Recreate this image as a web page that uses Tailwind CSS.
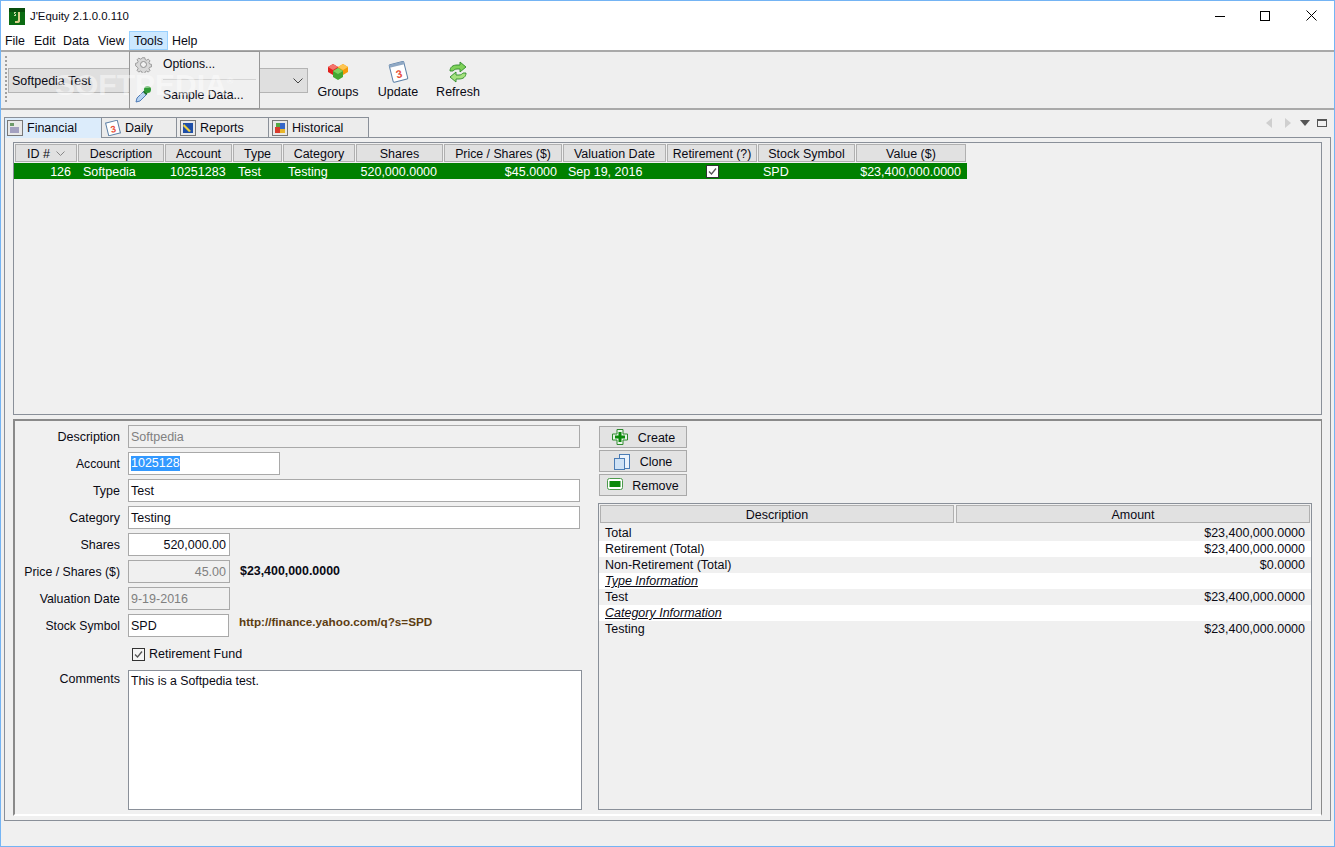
<!DOCTYPE html>
<html>
<head>
<meta charset="utf-8">
<script src="https://cdn.jsdelivr.net/npm/@tailwindcss/browser@4"></script>
</head>
<body class="m-0 overflow-hidden">
<div class="relative w-[1335px] h-[847px] border border-[#74b4f4] bg-[#f0f0f0] flex flex-col text-[12.5px] leading-[16px] text-[#0a0a14] font-['Liberation_Sans',Arial,sans-serif] overflow-hidden">

  <!-- title bar -->
  <div class="h-[29px] shrink-0 bg-white flex items-center pl-[8px] relative">
    <svg class="w-[16px] h-[17px] mt-[2px]" viewBox="0 0 16 17"><rect width="16" height="17" fill="#0b6b12"/><rect x="0" y="0" width="16" height="4" fill="#084d0c"/><path d="M9 4h2v9q0 2-3 2H6v-2h2q1 0 1-1z" fill="#d9d08a"/><path d="M5 4h2v1H6v1h1v2H5V7h1V6H5z" fill="#c6d7a0"/></svg>
    <span class="ml-[5px] mt-[1px] text-[11.4px]">J'Equity 2.1.0.0.110</span>
    <div class="absolute right-[0px] top-[0px] h-[29px] flex items-center">
      <svg class="w-[10px] h-[10px] mr-[35px]" viewBox="0 0 10 10"><path d="M0 5.5h10" stroke="#000" stroke-width="1"/></svg>
      <svg class="w-[10px] h-[10px] mr-[36px]" viewBox="0 0 10 10"><rect x=".5" y=".5" width="9" height="9" fill="none" stroke="#000"/></svg>
      <svg class="w-[11px] h-[11px] mr-[17px]" viewBox="0 0 11 11"><path d="M.5.5l10 10M10.5.5l-10 10" stroke="#000" stroke-width="1"/></svg>
    </div>
  </div>

  <!-- menu bar -->
  <div class="h-[20px] shrink-0 bg-white flex items-start text-[12.4px] pl-[4px] pt-[3px] leading-[16px]">
    <span class="mr-[10px] w-[19px]">File</span>
    <span class="mr-[7px] w-[22px]">Edit</span>
    <span class="mr-[9px] w-[26px]">Data</span>
    <span class="mr-[4px] w-[27px]">View</span>
    <span class="-mt-[2px] h-[19px] w-[39px] bg-[#cce8ff] border border-[#99d1ff] text-center leading-[18px]">Tools</span>
    <span class="ml-[4px]">Help</span>
  </div>

  <!-- toolbar -->
  <div class="h-[60px] shrink-0 border-t-2 border-b-2 border-[#a9a9a9] bg-[#efefef] flex items-start relative">
    <div class="ml-[4px] mt-[4px] w-[2px] h-[46px] border-l-2 border-dotted border-[#a0a0a0]"></div>
    <div class="ml-[1px] mt-[16px] w-[300px] h-[25px] bg-[#dfdfdf] border border-[#b4b4b4] flex items-center justify-between pl-[3px] pr-[4px]">
      <span>Softpedia Test</span>
      <svg class="w-[10px] h-[6px]" viewBox="0 0 10 6"><path d="M.5.5l4.5 4.5 4.5-4.5" fill="none" stroke="#444" stroke-width="1"/></svg>
    </div>
    <div class="ml-[10px] w-[40px] flex flex-col items-center mt-[10px]">
      <svg class="w-[22px] h-[19px]" viewBox="0 0 22 19"><path d="M1 5l5-3 5 3v5l-5 3-5-3z" fill="#e0201c"/><path d="M11 5l5-3 5 3v5l-5 3-5-3z" fill="#f59a0a"/><path d="M6 9l5-3 5 3v6l-5 3-5-3z" fill="#44a833"/><path d="M6 9l5 3 5-3-5-3z" fill="#7ed35f"/><path d="M1 5l5 3 5-3-5-3z" fill="#f4746b"/><path d="M11 5l5 3 5-3-5-3z" fill="#fdc552"/></svg>
      <span class="mt-[3px] whitespace-nowrap">Groups</span>
    </div>
    <div class="ml-[20px] w-[40px] flex flex-col items-center mt-[10px]">
      <svg class="w-[22px] h-[22px] -mt-[1px] -mb-[2px]" viewBox="0 0 22 22"><g transform="rotate(-14 11 11)"><rect x="4" y="2" width="15" height="18" rx="1" fill="#fff" stroke="#5b7fa6"/><rect x="4" y="2" width="15" height="3" fill="#8fa8c4"/><text x="11.5" y="17" font-size="11" font-weight="700" text-anchor="middle" fill="#e8503a" font-family="Liberation Sans">3</text></g></svg>
      <span class="mt-[3px] whitespace-nowrap">Update</span>
    </div>
    <div class="ml-[20px] w-[40px] flex flex-col items-center mt-[10px]">
      <svg class="w-[22px] h-[22px] -mt-[1px] -mb-[2px]" viewBox="0 0 22 22"><path d="M3 10c0-4 3-6 7-6h3V1l6 5-6 5V8h-3c-2 0-3 1-4 2z" fill="#7fd25a" stroke="#2f8a2a" stroke-width=".9"/><path d="M19 12c0 4-3 6-7 6H9v3l-6-5 6-5v3h3c2 0 3-1 4-2z" fill="#a5e27f" stroke="#2f8a2a" stroke-width=".9"/></svg>
      <span class="mt-[3px] whitespace-nowrap">Refresh</span>
    </div>
  </div>

  <!-- tabs row -->
  <div class="h-[27px] shrink-0 flex items-end pl-[3px] relative">
    <div class="w-[98px] h-[21px] bg-[#dcecfb] border border-b-0 border-[#8a9099] flex items-center pl-[2px] gap-[4px] -mb-px z-10">
      <svg class="w-[16px] h-[16px]" viewBox="0 0 16 16"><rect x=".5" y=".5" width="15" height="15" fill="#e8e8e8" stroke="#777"/><rect x="3" y="3" width="4" height="3" fill="#6d9a6a"/><rect x="3" y="7" width="9" height="6" fill="#a3a0c0"/></svg>
      <span>Financial</span>
    </div>
    <div class="w-[75px] h-[20px] bg-[#ececec] border border-b-0 border-l-0 border-[#8a9099] flex items-center pl-[3px] gap-[4px]">
      <svg class="w-[16px] h-[16px]" viewBox="0 0 16 16"><g transform="rotate(-14 8 8)"><rect x="2" y="1.500" width="12" height="13" fill="#fff" stroke="#5b7fa6"/><text x="8" y="12.500" font-size="9.500" font-weight="700" text-anchor="middle" fill="#e8503a" font-family="Liberation Sans">3</text></g></svg>
      <span>Daily</span>
    </div>
    <div class="w-[92px] h-[20px] bg-[#ececec] border border-b-0 border-l-0 border-[#8a9099] flex items-center pl-[3px] gap-[4px]">
      <svg class="w-[16px] h-[16px]" viewBox="0 0 16 16"><rect x=".5" y=".5" width="15" height="15" fill="#e8e8e8" stroke="#777"/><rect x="3" y="3" width="10" height="10" fill="#1f4fa8"/><path d="M4 4l7 7-2 1-6-6z" fill="#f2d23c"/></svg>
      <span>Reports</span>
    </div>
    <div class="w-[100px] h-[20px] bg-[#ececec] border border-b-0 border-l-0 border-[#8a9099] flex items-center pl-[3px] gap-[4px]">
      <svg class="w-[16px] h-[16px]" viewBox="0 0 16 16"><rect x=".5" y=".5" width="15" height="15" fill="#e8e8e8" stroke="#777"/><rect x="3" y="7" width="5" height="6" fill="#d93a2b"/><rect x="8" y="3" width="5" height="6" fill="#3467c9"/><rect x="8" y="9" width="5" height="4" fill="#e8b52a"/><rect x="4" y="3" width="4" height="4" fill="#55a844"/></svg>
      <span>Historical</span>
    </div>
    <div class="absolute right-[7px] top-[8px] flex items-center">
      <svg class="w-[6px] h-[10px] mr-[13px]" viewBox="0 0 6 10"><path d="M6 0v10L0 5z" fill="#cfcfcf"/></svg>
      <svg class="w-[6px] h-[10px] mr-[9px]" viewBox="0 0 6 10"><path d="M0 0v10l6-5z" fill="#cfcfcf"/></svg>
      <svg class="w-[10px] h-[6px] mr-[7px]" viewBox="0 0 10 6"><path d="M0 0h10L5 6z" fill="#555"/></svg>
      <svg class="w-[10px] h-[8px]" viewBox="0 0 10 8"><rect x=".5" y=".5" width="9" height="7" fill="none" stroke="#555"/><path d="M0 1.500h10" stroke="#555"/></svg>
    </div>
  </div>

  <!-- tab content -->
  <div class="ml-[3px] w-[1327px] h-[684px] shrink-0 border border-[#8a9099] pt-[4px] pl-[8px] flex flex-col">

    <!-- table panel -->
    <div class="w-[1309px] h-[273px] shrink-0 border border-[#8a9099]">
      <div class="grid grid-cols-[62px_86px_67px_49px_72px_87px_118px_103px_90px_97px_110px] gap-x-px pl-px pt-px h-[20px] w-[953px]">
        <div class="h-[18px] bg-[#e1e1e1] border border-[#b0b0b0] flex items-center justify-center"><span class="pt-[2px]">ID #</span><svg class="w-[9px] h-[5px] ml-[6px]" viewBox="0 0 9 5"><path d="M.5.500l4 4 4-4" fill="none" stroke="#888"/></svg></div>
        <div class="h-[18px] bg-[#e1e1e1] border border-[#b0b0b0] text-center leading-[18px]">Description</div>
        <div class="h-[18px] bg-[#e1e1e1] border border-[#b0b0b0] text-center leading-[18px]">Account</div>
        <div class="h-[18px] bg-[#e1e1e1] border border-[#b0b0b0] text-center leading-[18px]">Type</div>
        <div class="h-[18px] bg-[#e1e1e1] border border-[#b0b0b0] text-center leading-[18px]">Category</div>
        <div class="h-[18px] bg-[#e1e1e1] border border-[#b0b0b0] text-center leading-[18px]">Shares</div>
        <div class="h-[18px] bg-[#e1e1e1] border border-[#b0b0b0] text-center leading-[18px] text-[12.3px]">Price / Shares ($)</div>
        <div class="h-[18px] bg-[#e1e1e1] border border-[#b0b0b0] text-center leading-[18px]">Valuation Date</div>
        <div class="h-[18px] bg-[#e1e1e1] border border-[#b0b0b0] text-center leading-[18px] whitespace-nowrap text-[12.3px]">Retirement (?)</div>
        <div class="h-[18px] bg-[#e1e1e1] border border-[#b0b0b0] text-center leading-[18px]">Stock Symbol</div>
        <div class="h-[18px] bg-[#e1e1e1] border border-[#b0b0b0] text-center leading-[18px]">Value ($)</div>
      </div>
      <div class="grid grid-cols-[62px_86px_67px_49px_72px_87px_118px_103px_90px_97px_110px] gap-x-px pl-px h-[16px] w-[953px] bg-[#008000] text-white leading-[18px] whitespace-nowrap">
        <div class="text-right pr-[6px]">126</div>
        <div class="pl-[5px]">Softpedia</div>
        <div class="pl-[5px]">10251283</div>
        <div class="pl-[5px]">Test</div>
        <div class="pl-[5px]">Testing</div>
        <div class="text-right pr-[6px]">520,000.0000</div>
        <div class="text-right pr-[5px]">$45.0000</div>
        <div class="pl-[5px]">Sep 19, 2016</div>
        <div class="flex justify-center items-center h-[16px]"><svg class="w-[13px] h-[13px]" viewBox="0 0 13 13"><rect x=".5" y=".5" width="12" height="12" fill="#fff" stroke="#333"/><path d="M3 6.500l2.500 2.500L10 3.500" fill="none" stroke="#555" stroke-width="1.300"/></svg></div>
        <div class="pl-[5px]">SPD</div>
        <div class="text-right pr-[5px]">$23,400,000.0000</div>
      </div>
    </div>

    <!-- details panel -->
    <div class="mt-[4px] w-[1309px] h-[397px] shrink-0 border-t-2 border-l-2 border-[#8a8a8a] border-b-2 border-b-white border-r border-r-[#8a8a8a] flex">
      <!-- form -->
      <div class="w-[583px] shrink-0 pt-[4px]">
        <div class="flex h-[23px] items-center mb-[4px]"><div class="w-[105px] text-right">Description</div><div class="ml-[8px] w-[452px] h-[23px] border border-[#a9a9a9] bg-[#f0f0f0] pl-[2px] leading-[22px] text-[#808080]">Softpedia</div></div>
        <div class="flex h-[23px] items-center mb-[4px]"><div class="w-[105px] text-right text-[12.2px]">Account</div><div class="ml-[8px] w-[152px] h-[23px] border border-[#a9a9a9] bg-white pl-[2px] flex items-center"><span class="bg-[#3399ff] text-white leading-[15px]">1025128</span></div></div>
        <div class="flex h-[23px] items-center mb-[4px]"><div class="w-[105px] text-right">Type</div><div class="ml-[8px] w-[452px] h-[23px] border border-[#a9a9a9] bg-white pl-[2px] leading-[22px]">Test</div></div>
        <div class="flex h-[23px] items-center mb-[4px]"><div class="w-[105px] text-right">Category</div><div class="ml-[8px] w-[452px] h-[23px] border border-[#a9a9a9] bg-white pl-[2px] leading-[22px]">Testing</div></div>
        <div class="flex h-[23px] items-center mb-[4px]"><div class="w-[105px] text-right">Shares</div><div class="ml-[8px] w-[102px] h-[23px] border border-[#a9a9a9] bg-white pr-[3px] text-right leading-[22px]">520,000.00</div></div>
        <div class="flex h-[23px] items-center mb-[4px]"><div class="w-[105px] text-right text-[12.3px]">Price / Shares ($)</div><div class="ml-[8px] w-[102px] h-[23px] border border-[#a9a9a9] bg-[#f0f0f0] pr-[3px] text-right leading-[22px] text-[#808080]">45.00</div><div class="ml-[10px] font-bold text-[12.4px] -mt-[2px]">$23,400,000.0000</div></div>
        <div class="flex h-[23px] items-center mb-[4px]"><div class="w-[105px] text-right text-[12.4px]">Valuation Date</div><div class="ml-[8px] w-[102px] h-[23px] border border-[#a9a9a9] bg-[#f0f0f0] pl-[2px] leading-[22px] text-[#808080]">9-19-2016</div></div>
        <div class="flex h-[23px] items-center"><div class="w-[105px] text-right text-[12.2px]">Stock Symbol</div><div class="ml-[8px] w-[101px] h-[23px] border border-[#a9a9a9] bg-white pl-[2px] leading-[22px]">SPD</div><div class="ml-[10px] font-bold text-[11.7px] text-[#5c3d12] -mt-[7px] whitespace-nowrap">http://finance.yahoo.com/q?s=SPD</div></div>
        <div class="flex h-[14px] items-center mt-[10px] ml-[117px]"><svg class="w-[13px] h-[13px]" viewBox="0 0 13 13"><rect x=".5" y=".5" width="12" height="12" fill="#f4f4f4" stroke="#333"/><path d="M3 6.500l2.500 2.500L10 3.500" fill="none" stroke="#555" stroke-width="1.300"/></svg><span class="ml-[4px]">Retirement Fund</span></div>
        <div class="flex mt-[9px]"><div class="w-[105px] text-right mt-[1px]">Comments</div><div class="ml-[8px] w-[454px] h-[140px] border border-[#8a9099] bg-white pl-[2px] pt-[2px] text-[12.3px]">This is a Softpedia test.</div></div>
      </div>
      <!-- right side -->
      <div class="flex-1 pt-[5px] flex flex-col">
        <div class="ml-[1px] w-[88px] h-[22px] bg-[#e3e3e3] border border-[#a9a9a9] flex items-center relative justify-center">
          <svg class="absolute left-[12px] top-[2px] w-[16px] h-[16px]" viewBox="0 0 16 16"><path d="M5 .5h6v4.500h4.500v6H11v4.500H5V11H.5V5H5z" fill="#e8f4e8" stroke="#2f8a2f" stroke-width="1"/><path d="M6.500 3h3v3.500H13v3H9.500V13h-3V9.500H3v-3h3.500z" fill="#0b8a0b"/></svg>
          <span class="ml-[27px] pt-[2px]">Create</span>
        </div>
        <div class="ml-[1px] mt-[2px] w-[88px] h-[22px] bg-[#e3e3e3] border border-[#a9a9a9] flex items-center relative justify-center">
          <svg class="absolute left-[14px] top-[3px] w-[16px] h-[16px]" viewBox="0 0 16 16"><rect x="5.500" y=".5" width="10" height="14" fill="#eaf2fb" stroke="#4a7cb5"/><rect x=".5" y="4.500" width="10" height="11" fill="#cfe2f5" stroke="#4a7cb5"/></svg>
          <span class="ml-[26px] pt-[2px]">Clone</span>
        </div>
        <div class="ml-[1px] mt-[2px] w-[88px] h-[22px] bg-[#e3e3e3] border border-[#a9a9a9] flex items-center relative justify-center">
          <svg class="absolute left-[7px] top-[3px] w-[16px] h-[12px]" viewBox="0 0 16 12"><rect x=".5" y=".5" width="15" height="11" rx="2" fill="#fff" stroke="#4c9a4c"/><rect x="2.500" y="3" width="11" height="6" fill="#0b8a0b"/></svg>
          <span class="ml-[25px] pt-[2px]">Remove</span>
        </div>
        <div class="mt-[7px] w-[714px] h-[307px] border border-[#8a9099]">
          <div class="flex gap-[2px] pl-px pt-px">
            <div class="w-[354px] h-[18px] bg-[#e1e1e1] border border-[#b0b0b0] text-center leading-[18px]">Description</div>
            <div class="w-[354px] h-[18px] bg-[#e1e1e1] border border-[#b0b0b0] text-center leading-[18px]">Amount</div>
          </div>
          <div class="mt-[2px]">
            <div class="flex justify-between h-[16px] pl-[6px] pr-[6px] bg-[#f0f0f0]"><span>Total</span><span>$23,400,000.0000</span></div>
            <div class="flex justify-between h-[16px] pl-[6px] pr-[6px] bg-white"><span>Retirement (Total)</span><span>$23,400,000.0000</span></div>
            <div class="flex justify-between h-[16px] pl-[6px] pr-[6px] bg-[#f0f0f0]"><span>Non-Retirement (Total)</span><span>$0.0000</span></div>
            <div class="flex justify-between h-[16px] pl-[6px] pr-[6px] bg-white"><span class="italic underline">Type Information</span></div>
            <div class="flex justify-between h-[16px] pl-[6px] pr-[6px] bg-[#f0f0f0]"><span>Test</span><span>$23,400,000.0000</span></div>
            <div class="flex justify-between h-[16px] pl-[6px] pr-[6px] bg-white"><span class="italic underline">Category Information</span></div>
            <div class="flex justify-between h-[16px] pl-[6px] pr-[6px] bg-[#f0f0f0]"><span>Testing</span><span>$23,400,000.0000</span></div>
          </div>
        </div>
      </div>
    </div>
  </div>

  <!-- tools dropdown -->
  <div class="absolute left-[128px] top-[50px] w-[131px] h-[58px] bg-[#f0f0f0] border border-[#979797] z-30 flex flex-col">
    <div class="h-[23px] flex items-center pl-[5px]">
      <svg class="w-[17px] h-[17px] mt-[2px]" viewBox="0 0 17 17"><path d="M7 .5h3l.5 2.200 1.600.7 2-1.200 2 2-1.200 2 .7 1.600 2.200.5v3l-2.200.5-.7 1.600 1.200 2-2 2-2-1.200-1.600.7-.5 2.200H7l-.5-2.200-1.600-.7-2 1.200-2-2 1.200-2-.7-1.600L-.8 10V7l2.200-.5.7-1.600-1.200-2 2-2 2 1.200 1.600-.7z" transform="translate(1.300 1.300) scale(.85)" fill="#d8d8d8" stroke="#8f8f8f"/><circle cx="8.500" cy="8.500" r="3" fill="#f0f0f0" stroke="#8f8f8f"/></svg>
      <span class="ml-[11px] text-[12.2px] pt-[2px]">Options...</span>
    </div>
    <div class="ml-[33px] mr-[3px] mt-[4px] h-px bg-[#d4d4d4]"></div>
    <div class="h-[29px] flex items-center pl-[5px]">
      <svg class="w-[17px] h-[18px]" viewBox="0 0 17 18"><path d="M1 17l1-4 7-7 3 3-7 7z" fill="#b8d4f2" stroke="#3f6fb0" stroke-width=".9"/><path d="M8 7l3 3 1.500-1.500-3-3z" fill="#1f6b26"/><circle cx="12.500" cy="4.500" r="3.500" fill="#2f9a36"/></svg>
      <span class="ml-[11px] text-[12.2px] pt-[2px]">Sample Data...</span>
    </div>
  </div>

  <!-- watermark -->
  <div class="absolute left-[54px] top-[63px] text-[30px] leading-[34px] font-bold text-white/45 pointer-events-none z-40 whitespace-nowrap">SOFTPEDIA<span class="text-[9px] align-super">®</span></div>
</div>
</body>
</html>
